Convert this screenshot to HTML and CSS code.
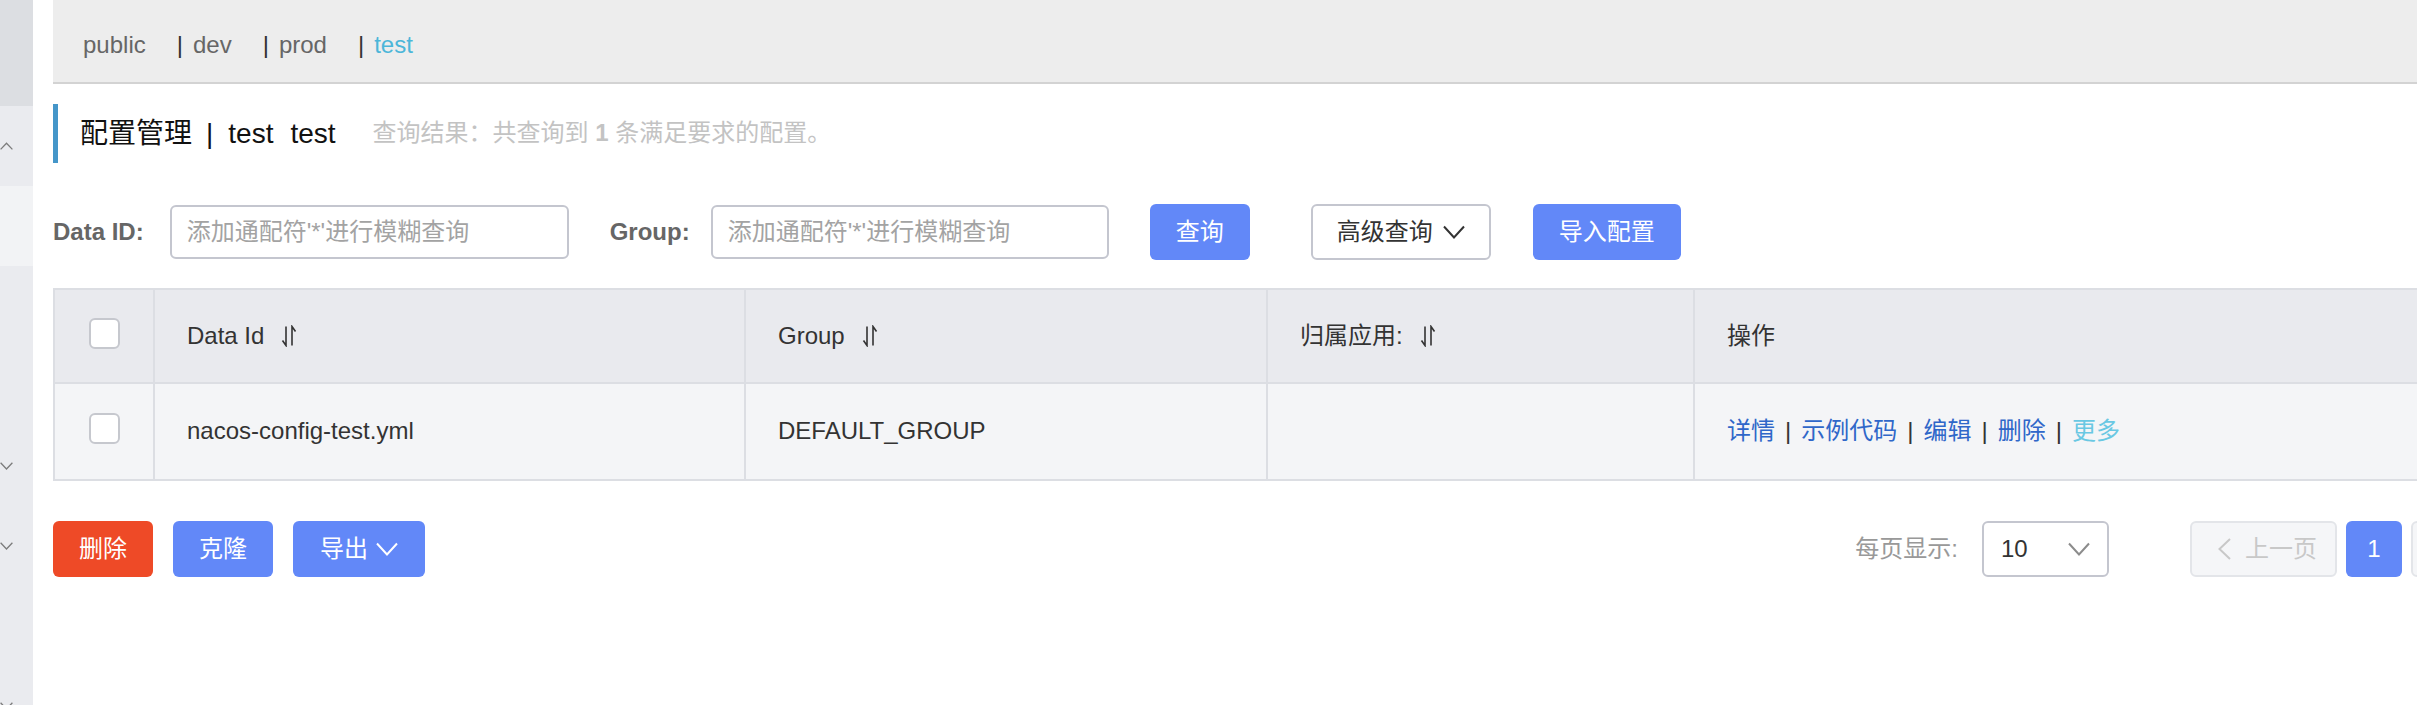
FILE: index.html
```html
<!DOCTYPE html>
<html lang="zh-CN">
<head>
<meta charset="utf-8">
<title>配置管理</title>
<link rel="stylesheet" href="styles.css">
</head>
<body>
<div class="app">
  <aside class="sidebar">
    <div class="sb-head"></div>
    <div class="sb-item"><svg class="chev" viewBox="0 0 14 8"><polyline points="0.6,7.4 6.5,1.2 12.4,7.4"/></svg></div>
    <div class="sb-item sb-active"></div>
    <div class="sb-item"></div>
    <div class="sb-item"></div>
    <div class="sb-item"><svg class="chev" viewBox="0 0 14 8"><polyline points="0.6,0.8 6.5,7 12.4,0.8"/></svg></div>
    <div class="sb-item"><svg class="chev" viewBox="0 0 14 8"><polyline points="0.6,0.8 6.5,7 12.4,0.8"/></svg></div>
    <div class="sb-item"></div>
    <div class="sb-item"><svg class="chev" viewBox="0 0 14 8"><polyline points="0.6,0.8 6.5,7 12.4,0.8"/></svg></div>
  </aside>

  <main class="main">
    <nav class="ns-bar">
      <span class="ns-item">public</span>
      <span class="ns-item"><span class="ns-sep">|</span>dev</span>
      <span class="ns-item"><span class="ns-sep">|</span>prod</span>
      <span class="ns-item"><span class="ns-sep">|</span><span class="ns-active">test</span></span>
    </nav>

    <div class="page-title">
      <span class="title-main">配置管理</span>
      <span class="title-main title-sep">|</span>
      <span class="title-main">test</span>
      <span class="title-main title-id">test</span>
      <span class="result">查询结果：共查询到 <b>1</b> 条满足要求的配置。</span>
    </div>

    <div class="search">
      <span class="f-label f-label-data">Data ID:</span>
      <input class="f-input" type="text" placeholder="添加通配符'*'进行模糊查询">
      <span class="f-label f-label-group">Group:</span>
      <input class="f-input f-input-group" type="text" placeholder="添加通配符'*'进行模糊查询">
      <button class="btn btn-primary btn-query">查询</button>
      <button class="btn btn-normal btn-adv">高级查询<svg class="dd" viewBox="0 0 22 14"><polyline points="1,1.5 11,12.5 21,1.5"/></svg></button>
      <button class="btn btn-primary btn-import">导入配置</button>
    </div>

    <table class="cfg">
      <thead>
        <tr>
          <th class="col-check"><span class="cb"></span></th>
          <th class="col-id"><div class="th-in">Data Id<svg class="sort" viewBox="0 0 16 22"><path d="M5 1.5V20.5L1.5 15.5M11 20.5V1.5L14.5 6.5"/></svg></div></th>
          <th class="col-group"><div class="th-in">Group<svg class="sort" viewBox="0 0 16 22"><path d="M5 1.5V20.5L1.5 15.5M11 20.5V1.5L14.5 6.5"/></svg></div></th>
          <th class="col-app"><div class="th-in">归属应用:<svg class="sort" viewBox="0 0 16 22"><path d="M5 1.5V20.5L1.5 15.5M11 20.5V1.5L14.5 6.5"/></svg></div></th>
          <th class="col-op"><div class="th-in">操作</div></th>
        </tr>
      </thead>
      <tbody>
        <tr>
          <td class="col-check"><span class="cb"></span></td>
          <td>nacos-config-test.yml</td>
          <td>DEFAULT_GROUP</td>
          <td></td>
          <td><a class="lnk">详情</a><span class="a-sep">|</span><a class="lnk">示例代码</a><span class="a-sep">|</span><a class="lnk">编辑</a><span class="a-sep">|</span><a class="lnk">删除</a><span class="a-sep">|</span><a class="lnk lnk-more">更多</a></td>
        </tr>
      </tbody>
    </table>

    <div class="footer">
      <button class="btn btn-danger btn-del">删除</button>
      <button class="btn btn-primary btn-clone">克隆</button>
      <button class="btn btn-primary btn-export">导出<svg class="dd dd-white" viewBox="0 0 22 14"><polyline points="1,1.5 11,12.5 21,1.5"/></svg></button>
      <div class="pager">
        <span class="pg-label">每页显示:</span>
        <div class="pg-select"><span>10</span><svg class="dd dd-gray" viewBox="0 0 22 14"><polyline points="1,1.5 11,12.5 21,1.5"/></svg></div>
        <button class="pg-btn pg-prev"><svg class="pg-arrow" viewBox="0 0 15 22"><polyline points="13,1 2.5,11 13,21"/></svg><span>上一页</span></button>
        <button class="pg-num">1</button>
        <button class="pg-btn pg-next"><span>下一页</span><svg class="pg-arrow" viewBox="0 0 15 22"><polyline points="2,1 12.5,11 2,21"/></svg></button>
      </div>
    </div>
  </main>
</div>
</body>
</html>
```
FILE: styles.css
```css
* { box-sizing: border-box; }
html, body { margin: 0; padding: 0; background: #fff; overflow: hidden; }
body {
  width: 2417px;
  height: 705px;
  font-family: "Liberation Sans", Arial, "Noto Sans CJK SC", sans-serif;
  font-size: 24px;
  line-height: 1.2;
  color: #333;
}

.app { display: flex; align-items: flex-start; width: 2700px; }

/* sidebar */
.sidebar {
  width: 33px;
  flex: none;
  height: 705px;
  background: #eaebef;
  display: flex;
  flex-direction: column;
  overflow: hidden;
}
.sb-head { height: 106px; flex: none; background: #dcdee2; }
.sb-item { height: 80px; flex: none; display: flex; align-items: center; }
.sb-active { background: #f2f3f5; }
.chev { width: 14px; height: 8px; display: block; fill: none; stroke: #7c7c7c; stroke-width: 1.3; }

/* main */
.main { width: 2505px; flex: none; margin-left: 20px; }

.ns-bar {
  height: 84px;
  background: #ededed;
  border-bottom: 2px solid #d3d3d3;
  display: flex;
  align-items: center;
  padding: 8px 0 0 30px;
  color: #666;
}
.ns-item { margin-right: 31px; white-space: nowrap; }
.ns-sep { color: #333; margin-right: 10px; }
.ns-active { color: #4cb6d9; }

.page-title {
  margin-top: 20px;
  height: 59px;
  border-left: 5px solid #4596c9;
  display: flex;
  align-items: center;
  padding-left: 22px;
  white-space: nowrap;
}
.title-main { font-size: 28px; color: #111; }
.title-sep { margin: 0 15px 0 14px; }
.title-id { margin-left: 17px; }
.result { margin-left: 37px; color: #c3c3c3; }
.result b { font-weight: bold; }

/* search */
.search { margin-top: 41px; display: flex; align-items: center; height: 56px; white-space: nowrap; }
.f-label { font-weight: bold; color: #666; }
.f-label-data { margin-right: 26px; }
.f-label-group { margin-left: 41px; margin-right: 21px; }
.f-input {
  width: 399px;
  height: 54px;
  border: 2px solid #c4c6cf;
  border-radius: 6px;
  padding: 0 15px;
  font: inherit;
  color: #333;
  background: #fff;
  outline: none;
}
.f-input-group { width: 398px; }
.f-input::placeholder { color: #a3a3a3; }

.btn {
  height: 56px;
  border: 0;
  border-radius: 6px;
  font: inherit;
  display: inline-flex;
  align-items: center;
  justify-content: center;
  padding: 0;
  cursor: pointer;
}
.btn-primary { background: #6288f8; color: #fff; }
.btn-danger { background: #ee4a27; color: #fff; }
.btn-normal { background: #fff; border: 2px solid #c4c6cf; color: #333; }
.btn-query { width: 100px; margin-left: 41px; }
.btn-adv { width: 180px; margin-left: 61px; gap: 10px; }
.btn-import { width: 148px; margin-left: 42px; }

.dd { width: 22px; height: 14px; display: block; fill: none; stroke: #333; stroke-width: 2; }
.dd-white { stroke: #fff; }
.dd-gray { stroke: #8c8c8c; }

/* table */
.cfg {
  margin-top: 28px;
  width: 100%;
  border-spacing: 0;
  border-collapse: separate;
  border-top: 2px solid #dcdee3;
  border-left: 2px solid #dcdee3;
  table-layout: fixed;
}
.cfg th, .cfg td {
  border-right: 2px solid #dcdee3;
  border-bottom: 2px solid #dcdee3;
  padding: 0 0 0 32px;
  text-align: left;
  font-weight: normal;
  color: #333;
  vertical-align: middle;
  white-space: nowrap;
}
.cfg th { background: #e9eaee; height: 94px; }
.cfg td { background: #f4f5f7; height: 97px; }
.cfg .col-check { width: 100px; padding: 0; }
.col-id { width: 591px; }
.col-group { width: 522px; }
.col-app { width: 427px; }
.th-in { display: flex; align-items: center; }
.sort { width: 16px; height: 22px; margin-left: 17px; fill: none; stroke: #333; stroke-width: 1.6; display: block; }

.cb {
  display: block;
  width: 31px;
  height: 31px;
  margin: -6px auto 0;
  border: 2px solid #c6c8ce;
  border-radius: 6px;
  background: #fff;
}

.lnk { color: #2f67c9; text-decoration: none; cursor: pointer; }
.lnk-more { color: #6ac8e3; }
.a-sep { color: #333; margin: 0 10px; }

/* footer */
.footer { margin-top: 40px; display: flex; align-items: center; height: 56px; white-space: nowrap; }
.btn-del { width: 100px; }
.btn-clone { width: 100px; margin-left: 20px; }
.btn-export { width: 132px; margin-left: 20px; gap: 8px; }

.pager { margin-left: auto; display: flex; align-items: center; }
.pg-label { color: #999; margin-right: 24px; }
.pg-select {
  width: 127px;
  height: 56px;
  border: 2px solid #c4c6cf;
  border-radius: 6px;
  display: flex;
  align-items: center;
  justify-content: space-between;
  padding: 0 17px;
  color: #333;
}
.pg-btn {
  width: 147px;
  height: 56px;
  border: 2px solid #e3e5e9;
  background: #f5f6f8;
  color: #c8c8c8;
  border-radius: 6px;
  font: inherit;
  display: flex;
  align-items: center;
  gap: 13px;
  padding: 0 0 0 25px;
}
.pg-prev { margin-left: 81px; }
.pg-next { margin-left: 9px; }
.pg-arrow { width: 15px; height: 22px; display: block; fill: none; stroke: #c8c8c8; stroke-width: 2; }
.pg-num {
  width: 56px;
  height: 56px;
  margin-left: 9px;
  border: 0;
  border-radius: 6px;
  background: #6288f8;
  color: #fff;
  font: inherit;
  padding: 0;
}
```
